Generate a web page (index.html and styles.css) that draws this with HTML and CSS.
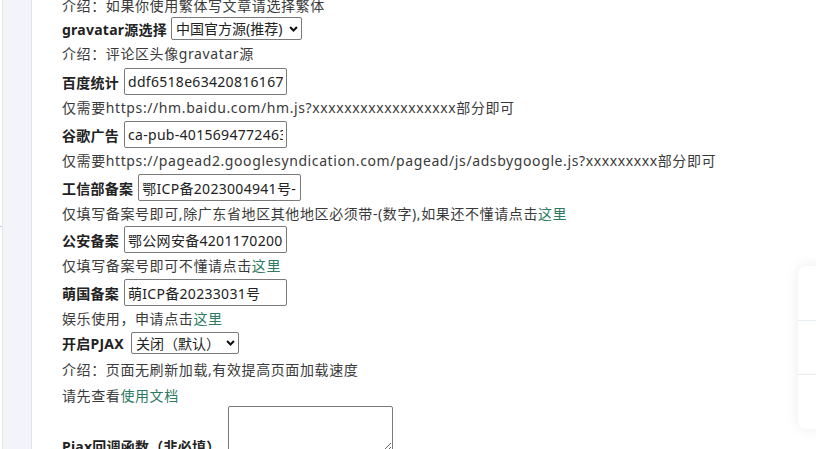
FILE: index.html
```html
<!DOCTYPE html>
<html lang="zh-CN">
<head>
<meta charset="utf-8">
<link rel="stylesheet" href="styles.css">
</head>
<body>
<div class="page">
  <aside class="rail"><span class="tick"></span></aside>
  <main class="form">
    <div class="desc d-first">介绍：如果你使用繁体写文章请选择繁体</div>
    <div class="field f-gravatar">
      <b class="label">gravatar源选择</b>
      <span class="sel sel-gravatar">
        <select><option>中国官方源(推荐)</option></select>
        <svg class="chev" viewBox="0 0 10 7" width="9" height="6"><path d="M1 1.2 L5 5.2 L9 1.2" fill="none" stroke="#111" stroke-width="2.4"/></svg>
      </span>
    </div>
    <div class="desc d-tall">介绍：评论区头像gravatar源</div>
    <div class="field">
      <b class="label">百度统计</b>
      <input class="txt" type="text" value="ddf6518e634208161677a3b9c2e">
    </div>
    <div class="desc">仅需要https://hm.baidu.com/hm.js?xxxxxxxxxxxxxxxxxx部分即可</div>
    <div class="field">
      <b class="label">谷歌广告</b>
      <input class="txt" type="text" value="ca-pub-4015694772463912">
    </div>
    <div class="desc">仅需要https://pagead2.googlesyndication.com/pagead/js/adsbygoogle.js?xxxxxxxxx部分即可</div>
    <div class="field">
      <b class="label">工信部备案</b>
      <input class="txt" type="text" value="鄂ICP备2023004941号-1">
    </div>
    <div class="desc d-short">仅填写备案号即可,除广东省地区其他地区必须带-(数字),如果还不懂请点击<a href="#">这里</a></div>
    <div class="field">
      <b class="label">公安备案</b>
      <input class="txt" type="text" value="鄂公网安备42011702000123号">
    </div>
    <div class="desc">仅填写备案号即可不懂请点击<a href="#">这里</a></div>
    <div class="field">
      <b class="label">萌国备案</b>
      <input class="txt" type="text" value="萌ICP备20233031号">
    </div>
    <div class="desc">娱乐使用，申请点击<a href="#">这里</a></div>
    <div class="field f-pjax">
      <b class="label">开启PJAX</b>
      <span class="sel sel-pjax">
        <select><option>关闭（默认）</option></select>
        <svg class="chev" viewBox="0 0 10 7" width="9" height="6"><path d="M1 1.2 L5 5.2 L9 1.2" fill="none" stroke="#111" stroke-width="2.4"/></svg>
      </span>
    </div>
    <div class="desc d-after-pjax">介绍：页面无刷新加载,有效提高页面加载速度</div>
    <div class="desc d-doc">请先查看<a href="#">使用文档</a></div>
    <div class="area-row">
      <b class="label">Pjax回调函数（非必填）</b><textarea class="area"></textarea>
    </div>
  </main>
  <div class="float-card">
    <div class="fc-item"></div>
    <div class="fc-item"></div>
    <div class="fc-item"></div>
  </div>
</div>
</body>
</html>
```

FILE: styles.css
```css
html, body {
  margin: 0;
  padding: 0;
  background: #fff;
  overflow: hidden;
}
body {
  font-family: "Noto Sans", "Noto Sans CJK SC", sans-serif;
  font-size: 14px;
  color: #3a3a3a;
}
.page {
  display: flex;
  height: 449px;
  position: relative;
}
.rail {
  position: relative;
  margin-left: 2px;
  width: 28px;
  flex: 0 0 28px;
  background: #f3f4f9;
  border-left: 1px solid #e6e8ee;
  border-right: 1px solid #dfe2ea;
}
.tick {
  position: absolute;
  left: -3px;
  top: 226px;
  width: 2px;
  height: 1px;
  background: #c8ccd4;
}
.form {
  margin-left: 30px;
  margin-top: -5px;
  display: flex;
  flex-direction: column;
}
.desc {
  height: 26px;
  line-height: 26px;
  white-space: nowrap;
  letter-spacing: 0.6px;
}
.d-first { height: 23px; line-height: 22px; }
.d-tall { height: 28px; line-height: 28px; }
.d-short { height: 25px; line-height: 25px; }
.d-after-pjax { height: 29px; line-height: 26px; padding-top: 3px; box-sizing: border-box; }
.d-doc { height: 23px; line-height: 25px; }
.desc a {
  color: #2d7a62;
  text-decoration: none;
}
.field {
  height: 27px;
  display: flex;
  align-items: center;
}
.f-gravatar { height: 23px; }
.f-pjax { height: 22px; }
.label {
  font-weight: 700;
  color: #222;
  white-space: nowrap;
  letter-spacing: 0.25px;
}
.txt {
  box-sizing: border-box;
  margin: 0 0 0 5px;
  width: 163px;
  height: 27px;
  border: 1px solid #7a7a7a;
  border-radius: 2px;
  padding: 0 3px;
  font: inherit;
  font-size: 14px;
  letter-spacing: 0.3px;
  color: #222;
  background: #fff;
}
.sel {
  position: relative;
  display: inline-flex;
  margin-left: 4px;
}
.sel-pjax { margin-left: 7px; }
.sel select {
  -webkit-appearance: none;
  appearance: none;
  box-sizing: border-box;
  height: 23px;
  border: 1px solid #7a7a7a;
  border-radius: 2px;
  padding: 0 18px 0 4px;
  font: inherit;
  font-size: 14px;
  color: #222;
  background: #fff;
}
.sel-gravatar select { width: 131px; }
.sel-pjax select { width: 108px; height: 22px; }
.chev {
  position: absolute;
  right: 4px;
  top: 50%;
  margin-top: -3px;
  pointer-events: none;
}
.area-row {
  display: block;
  white-space: nowrap;
}
.area {
  box-sizing: border-box;
  vertical-align: baseline;
  margin: 0 0 0 7px;
  width: 165px;
  height: 46px;
  border: 1px solid #7a7a7a;
  border-radius: 2px;
  resize: vertical;
}
.float-card {
  position: absolute;
  left: 798px;
  top: 266px;
  width: 60px;
  height: 163px;
  background: #fff;
  border-radius: 8px;
  box-shadow: 0 0 14px rgba(0, 0, 0, 0.08);
  display: flex;
  flex-direction: column;
}
.fc-item {
  flex: 1;
  border-bottom: 1px solid #e6ecef;
}
.fc-item:last-child { border-bottom: none; }
```
